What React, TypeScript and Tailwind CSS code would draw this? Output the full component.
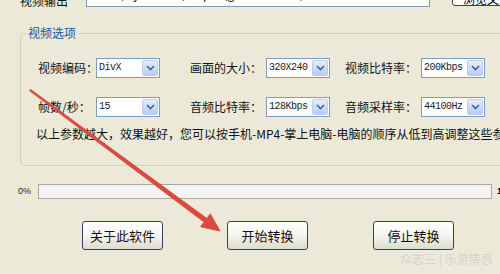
import React from "react";

function Chevron() {
  return (
    <svg width="9" height="6" viewBox="0 0 9 6">
      <path d="M1 1 L4.5 4.5 L8 1" fill="none" stroke="#4d6185" strokeWidth="1.6" />
    </svg>
  );
}

function Select({ value }: { value: string }) {
  return (
    <div className="flex h-[20px] w-[64px] shrink-0 border border-[#7f9db9] bg-white">
      <div className="flex-1 overflow-hidden whitespace-nowrap pl-[2px] font-['Liberation_Mono',monospace] text-[10px] leading-[18px] tracking-[-0.5px] text-[#222]">
        {value}
      </div>
      <div className="m-[1px] flex h-[16px] w-[16px] items-center justify-center rounded-[2px] border border-[#bccdf5] bg-gradient-to-b from-[#e6eefe] to-[#b7cbf7]">
        <Chevron />
      </div>
    </div>
  );
}

function Label({ text, w }: { text: string; w: string }) {
  return <div className={`${w} shrink-0 whitespace-nowrap text-[12px] leading-[20px] text-[#111]`}>{text}</div>;
}

function Btn({ text }: { text: string }) {
  return (
    <div className="flex h-[29px] w-[81px] shrink-0 items-center justify-center rounded-[3px] border border-[#34445f] bg-gradient-to-b from-[#ffffff] via-[#f5f4ef] to-[#dedbcf] text-[13px] text-[#111]">
      {text}
    </div>
  );
}

export default function App() {
  return (
    <div className="relative h-[274px] w-[500px] overflow-hidden bg-[#ece9d9] font-['Noto_Sans_CJK_SC',sans-serif]">
      {/* top row (cut) */}
      <div className="mt-[-14px] flex h-[21px] items-end">
        <div className="mb-[-1px] w-[86px] shrink-0 whitespace-nowrap pl-[20px] text-[12px] leading-[14px] text-[#111]">视频输出</div>
        <div className="h-[21px] w-[344px] shrink-0 overflow-hidden whitespace-nowrap border border-[#7f9db9] bg-white pl-[20px] text-[12px] leading-[14px] text-[#222]">
          D:\My Videos\output\g 转换后视频\转换器 .
        </div>
        <div className="mb-[1px] ml-[22px] flex h-[22px] w-[70px] shrink-0 items-end justify-center overflow-hidden rounded-[3px] border border-[#34445f] bg-white text-[12px] leading-[12px]">
          浏览文件
        </div>
      </div>

      {/* group box */}
      <div className="relative ml-[20px] mt-[26px] h-[133px] w-[520px] rounded-[5px] border border-[#d0cfc0] pt-[24px]">
        <span className="absolute left-[5px] top-[-9px] bg-[#ece9d9] px-[2px] text-[12px] leading-[16px] text-[#2255a0]">
          视频选项
        </span>
        <div className="flex h-[20px] items-center pl-[17px]">
          <Label text="视频编码：" w="w-[58px]" />
          <Select value="DivX" />
          <div className="w-[30px] shrink-0" />
          <Label text="画面的大小：" w="w-[76px]" />
          <Select value="320X240" />
          <div className="w-[15px] shrink-0" />
          <Label text="视频比特率：" w="w-[76px]" />
          <Select value="200Kbps" />
        </div>
        <div className="mt-[19px] flex h-[20px] items-center pl-[17px]">
          <Label text="帧数/秒：" w="w-[58px]" />
          <Select value="15" />
          <div className="w-[30px] shrink-0" />
          <Label text="音频比特率：" w="w-[76px]" />
          <Select value="128Kbps" />
          <div className="w-[15px] shrink-0" />
          <Label text="音频采样率：" w="w-[76px]" />
          <Select value="44100Hz" />
        </div>
        <div className="mt-[9px] whitespace-nowrap pl-[15px] text-[12px] leading-[16px] text-[#111]">
          以上参数越大，效果越好，您可以按手机-MP4-掌上电脑-电脑的顺序从低到高调整这些参数
        </div>
      </div>

      {/* progress */}
      <div className="mt-[18px] flex h-[15px] items-center">
        <div className="w-[38px] shrink-0 pl-[18px] font-['Liberation_Sans',sans-serif] text-[9px] leading-[15px] text-[#222]">0%</div>
        <div className="h-[15px] w-[454px] shrink-0 border border-[#a9a9a0] bg-[#f3f3f4]" />
        <div className="ml-[5px] font-['Liberation_Sans',sans-serif] text-[9px] font-bold leading-[15px]">1</div>
      </div>

      {/* buttons */}
      <div className="ml-[82px] mt-[22px] flex gap-[64px]">
        <Btn text="关于此软件" />
        <Btn text="开始转换" />
        <div className="ml-[1px]">
          <Btn text="停止转换" />
        </div>
      </div>

      {/* watermark */}
      <div className="absolute left-[400px] top-[251px] whitespace-nowrap text-[12px] leading-[16px] text-[#d6d4ca]">
        众志三 | 乐游情感
      </div>

      {/* red arrow */}
      <svg className="pointer-events-none absolute left-0 top-0" width="500" height="274">
        <polygon
          points="30.5,89.4 206.8,218.5 210.3,213.9 220,231 200.7,226.7 204.2,222.1 29.5,90.6"
          fill="#dc4a3f"
          stroke="#dc4a3f"
          strokeWidth="1"
          strokeLinejoin="round"
        />
      </svg>
    </div>
  );
}
